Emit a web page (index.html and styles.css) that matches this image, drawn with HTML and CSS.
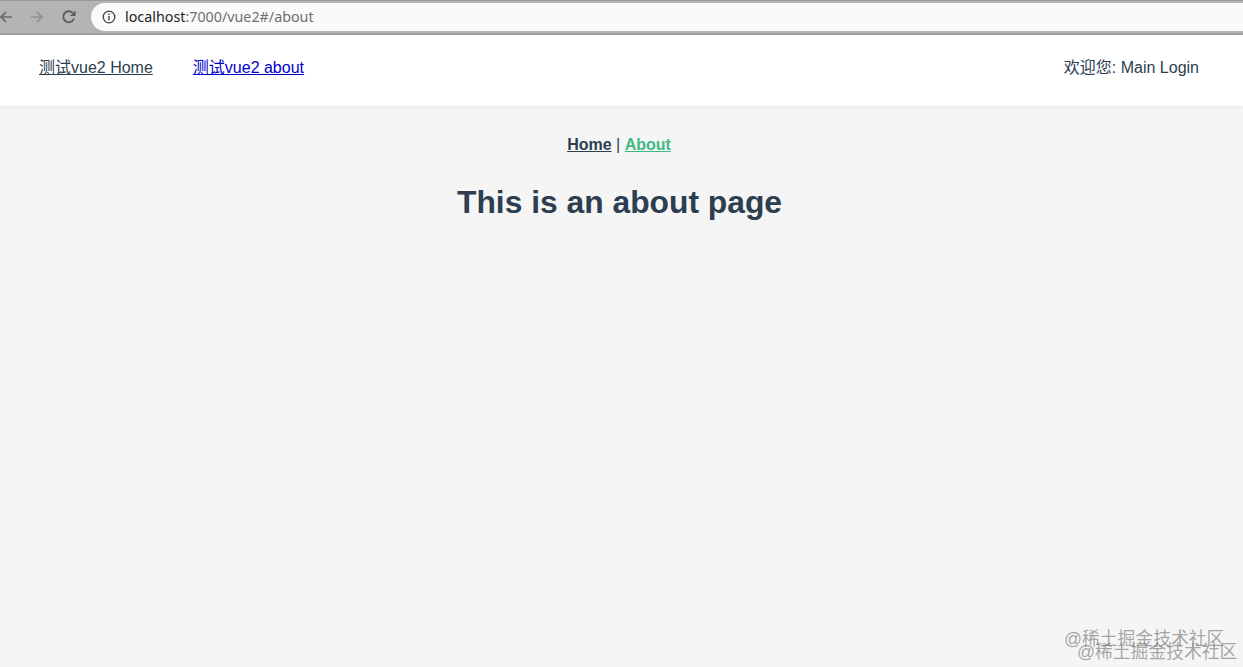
FILE: index.html
```html
<!DOCTYPE html>
<html lang="zh-CN">

<head>
    <meta charset="UTF-8">
    <title>about</title>
    <link rel="stylesheet" href="styles.css">
</head>

<body>

    <!-- Browser toolbar -->
    <div class="toolbar">
        <svg class="tool-icon back" viewBox="0 0 16 16" width="16" height="16">
            <path d="M14 8H3M8 3L3 8l5 5" fill="none" stroke="#6a6a6a" stroke-width="1.7"/>
        </svg>
        <svg class="tool-icon forward" viewBox="0 0 16 16" width="16" height="16">
            <path d="M2 8h11M8 3l5 5-5 5" fill="none" stroke="#909090" stroke-width="1.7"/>
        </svg>
        <svg class="tool-icon reload" viewBox="0 0 16 16" width="16" height="16">
            <path d="M13 9.5A5.5 5.5 0 1 1 11.8 4" fill="none" stroke="#5c5c5c" stroke-width="1.8"/>
            <path d="M14.5 1.5v5.5H9z" fill="#5c5c5c"/>
        </svg>
        <div class="address">
            <svg class="info-icon" viewBox="0 0 14 14" width="14" height="14">
                <circle cx="7" cy="7" r="5.8" fill="none" stroke="#444" stroke-width="1.3"/>
                <path d="M7 6v4.2M7 3.6v1.3" stroke="#444" stroke-width="1.4"/>
            </svg>
            <span class="host">localhost</span><span class="path">:7000/vue2#/about</span>
        </div>
    </div>

    <!-- Header -->
    <div class="top-nav">
        <div class="nav-links">
            <a class="nav-home" href="#">测试vue2 Home</a>
            <a href="#">测试vue2 about</a>
        </div>
        <div class="welcome">欢迎您: Main Login</div>
    </div>

    <!-- Page -->
    <div class="content">
        <div class="sub-nav">
            <a class="sub-home" href="#">Home</a> | <a class="sub-about" href="#">About</a>
        </div>
        <h1>This is an about page</h1>
    </div>

    <div class="mark mark-back">@稀土掘金技术社区</div>
    <div class="mark mark-front">@稀土掘金技术社区</div>

</body>

</html>
```

FILE: styles.css
```css
* {
    box-sizing: border-box;
}

body {
    margin: 0;
    height: 667px;
    overflow: hidden;
    font-family: "Liberation Sans", "Noto Sans CJK SC", Arial, sans-serif;
    background-color: #f5f5f5;
    color: #2c3e50;
    display: flex;
    flex-direction: column;
}

.toolbar {
    display: flex;
    align-items: center;
    height: 35px;
    padding: 2px 0;
    background-color: #b4b4b4;
    border-top: 1px solid #9a9a9a;
    border-bottom: 2px solid #a2a2a2;
}

.tool-icon {
    flex-shrink: 0;
}

.back {
    margin-left: -2px;
}

.forward {
    margin-left: 15px;
}

.reload {
    margin-left: 16px;
}

.address {
    flex: 1;
    display: flex;
    align-items: center;
    height: 28px;
    margin-left: 14px;
    padding-left: 11px;
    background-color: #fafafa;
    border-radius: 14px 0 0 14px;
    font-family: "Noto Sans", "Liberation Sans", sans-serif;
    font-size: 14.3px;
}

.info-icon {
    margin-right: 9px;
}

.host {
    color: #222;
    margin-top: -2px;
}

.path {
    color: #6f6f6f;
    margin-top: -2px;
}

.top-nav {
    display: flex;
    justify-content: space-between;
    align-items: center;
    height: 71px;
    padding: 0 44px 10px 39px;
    background-color: #fff;
    box-shadow: 0 1px 4px rgba(0, 0, 0, 0.08);
    font-size: 16px;
}

.nav-links {
    display: flex;
    gap: 40px;
}

.nav-links a {
    color: #00c;
}

.nav-links .nav-home {
    color: #2c3e50;
}

.content {
    flex: 1;
    text-align: center;
    padding-top: 29px;
}

.sub-nav {
    font-size: 16px;
    line-height: 19px;
    padding-right: 5px;
}

.sub-nav a {
    font-weight: bold;
}

.sub-home {
    color: #2c3e50;
}

.sub-about {
    color: #42b983;
}

h1 {
    margin: 30px 0 0;
    font-size: 31.8px;
    line-height: 37px;
    padding-right: 4px;
}

.mark {
    position: absolute;
    font-size: 17.8px;
    white-space: nowrap;
    color: rgba(110, 110, 110, 0.6);
}

.mark-back {
    left: 1064px;
    top: 624px;
}

.mark-front {
    left: 1077px;
    top: 637px;
}
```
